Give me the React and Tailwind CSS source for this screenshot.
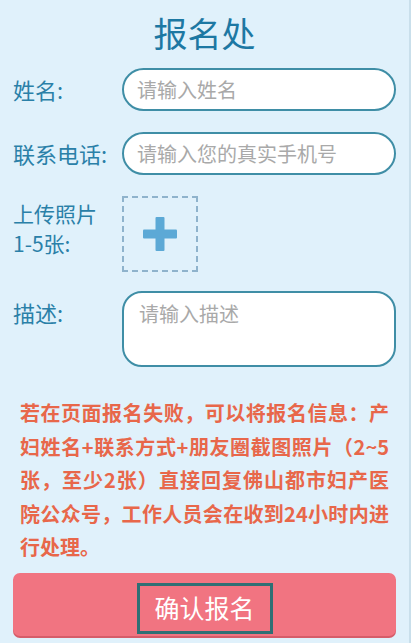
import React from 'react';

const font = { fontFamily: '"Noto Sans CJK SC", "Noto Sans", sans-serif' };

const lines = [
  '若在页面报名失败，可以将报名信息：产',
  '妇姓名+联系方式+朋友圈截图照片（2~5',
  '张，至少2张）直接回复佛山都市妇产医',
  '院公众号，工作人员会在收到24小时内进',
];

const App = () => {
  return (
    <div
      className="w-[411px] h-[643px] overflow-hidden bg-[#e0f1fb] border-r-2 border-[#c9dfeb] flex flex-col"
      style={font}
    >
      <h1 className="text-center text-[34px] leading-[40px] text-[#1d78a3] mt-[13px]">报名处</h1>

      <div className="flex flex-col mt-[15px] pl-[13px] pr-[13px]">
        <div className="flex items-center">
          <label className="w-[109px] text-[22px] text-[#2a80a8]">姓名:</label>
          <input
            placeholder="请输入姓名"
            className="flex-1 h-[43px] rounded-full border-2 border-[#3f8ea6] bg-white px-[13px] text-[20px] placeholder:text-[#a9a9a9] outline-none"
          />
        </div>

        <div className="flex items-center mt-[21px]">
          <label className="w-[109px] text-[22px] text-[#2a80a8] whitespace-nowrap">联系电话:</label>
          <input
            placeholder="请输入您的真实手机号"
            className="flex-1 h-[43px] rounded-full border-2 border-[#3f8ea6] bg-white px-[13px] text-[20px] placeholder:text-[#a9a9a9] outline-none"
          />
        </div>

        <div className="flex items-start mt-[21px]">
          <label className="w-[109px] text-[21px] leading-[30px] text-[#2a80a8] pt-[2px]">
            上传照片
            <br />
            1-5张:
          </label>
          <button className="w-[76px] h-[76px] border-2 border-dashed border-[#8fb3cc] flex items-center justify-center">
            <svg width="34" height="34" viewBox="0 0 34 34">
              <rect x="0" y="12.5" width="34" height="9" rx="1" fill="#5ca9d6" />
              <rect x="12.5" y="0" width="9" height="34" rx="1" fill="#5ca9d6" />
            </svg>
          </button>
        </div>

        <div className="flex items-start mt-[19px]">
          <label className="w-[109px] text-[22px] text-[#2a80a8] pt-[5px]">描述:</label>
          <textarea
            placeholder="请输入描述"
            className="flex-1 h-[76px] rounded-[20px] border-2 border-[#3f8ea6] bg-white px-[15px] py-[6px] text-[20px] leading-[30px] placeholder:text-[#a9a9a9] outline-none resize-none"
          />
        </div>
      </div>

      <p className="mt-[29px] mx-[20px] text-[20px] leading-[33.5px] font-bold text-[#e8674a]">
        {lines.map((l, i) => (
          <span key={i} className="block whitespace-nowrap text-justify [text-align-last:justify]">
            {l}
          </span>
        ))}
        <span className="block">行处理。</span>
      </p>

      <button className="mt-[9px] mx-[13px] h-[63px] shrink-0 rounded-[7px] bg-[#f17481] shadow-[0_2px_0_#d65c69] flex justify-center">
        <span className="mt-[10px] w-[136px] h-[51px] border-[3px] border-[#2f6f74] text-white text-[25px] flex items-center justify-center">
          确认报名
        </span>
      </button>
    </div>
  );
};

export default App;
